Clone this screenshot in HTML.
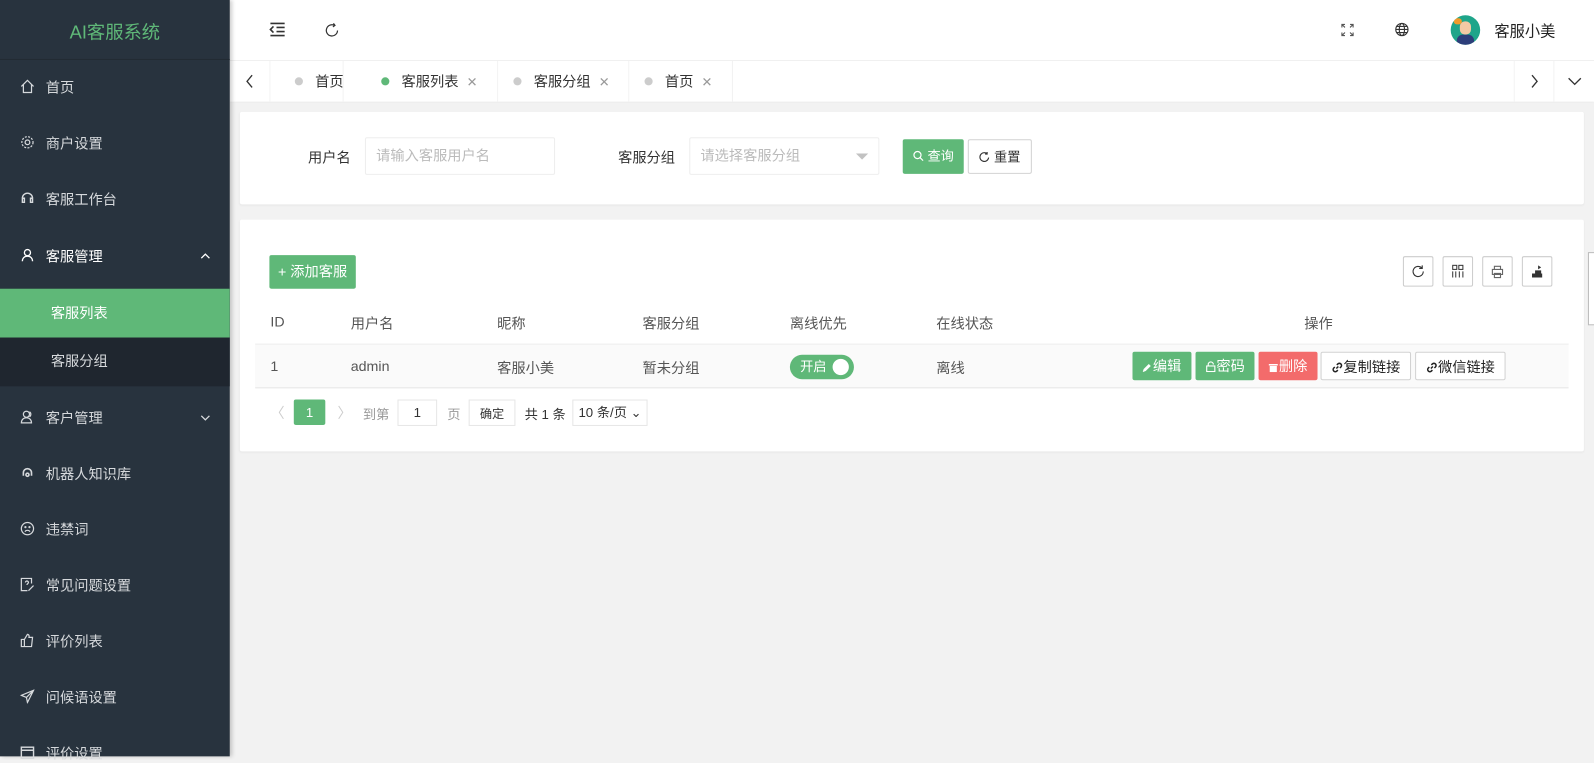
<!DOCTYPE html>
<html><head><meta charset="utf-8"><style>
*{margin:0;padding:0;box-sizing:border-box}
html,body{width:1594px;height:756px;overflow:hidden;background:#f2f2f2}
#root{position:absolute;left:0;top:0;width:1568px;height:744px;transform:scale(1.0166);transform-origin:0 0;font-family:"Liberation Sans","Noto Sans CJK SC",sans-serif;font-size:14px;color:#333}
.side{position:absolute;left:0;top:0;width:226px;height:744px;background:#28333e;box-shadow:2px 0 4px rgba(0,0,0,.2);z-index:2}
.logo{height:59px;line-height:64px;text-align:center;color:#5fb878;font-size:18px;border-bottom:1px solid #222b33}
.mi{position:absolute;left:0;width:226px;color:#d6d9dc;font-size:14px;height:20px;line-height:20px;white-space:nowrap}
.mi .ic{position:absolute;left:20px;top:2px;width:14px;height:14px}
.mi span.t{position:absolute;left:45px}
.mi .ar{position:absolute;right:18px;top:4px}
.hdr{position:absolute;left:226px;top:0;right:0;height:60px;background:#fff;border-bottom:1px solid #f0f0f0}
.tabs{position:absolute;left:226px;top:60px;right:0;height:40px;background:#fff;box-shadow:0 1px 2px rgba(0,0,0,.05)}
.tab{position:absolute;top:0;height:40px;line-height:40px;border-right:1px solid #f2f2f2;color:#333;font-size:14px;white-space:nowrap}
.dot{display:inline-block;width:8px;height:8px;border-radius:4px;background:#ccc;margin-right:12px;vertical-align:1px}
.x{color:#999;margin-left:8px;font-size:13px}
.card{position:absolute;left:236px;width:1322px;background:#fff;border-radius:2px;box-shadow:0 1px 2px rgba(0,0,0,.05)}
.inp{position:absolute;height:37px;border:1px solid #eee;border-radius:2px;color:#bbb;font-size:14px;line-height:35px;padding-left:10px;white-space:nowrap}
.btn{position:absolute;height:34px;line-height:34px;font-size:14px;text-align:center;border-radius:2px;white-space:nowrap}
.g{background:#5fb878;color:#fff}
.w{background:#fff;border:1px solid #d2d2d2;color:#333}
.th{position:absolute;top:308px;color:#555;font-size:14px;white-space:nowrap}
.td{position:absolute;top:352px;color:#555;font-size:14px;white-space:nowrap}
.sb{position:absolute;height:28px;line-height:28px;font-size:14px;top:346px;text-align:center;border-radius:2px;white-space:nowrap}
.sb svg{vertical-align:-1px;margin-right:1px}
.tool{position:absolute;top:252px;width:30px;height:30px;border:1px solid #ccc;border-radius:2px;background:#fff}
</style></head><body><div id="root">
<div class="side">
<div class="logo">AI客服系统</div>
<div class="mi" style="top:76px"><svg class="ic" viewBox="0 0 14 14" fill="none" stroke="#d6d9dc" stroke-width="1.2"><path d="M1 7L7 1l6 6M3 5v8h8V5"/></svg><span class="t">首页</span></div>
<div class="mi" style="top:131px"><svg class="ic" viewBox="0 0 14 14" fill="none" stroke="#d6d9dc" stroke-width="1.2"><circle cx="7" cy="7" r="2.3"/><circle cx="7" cy="7" r="5.5" stroke-dasharray="2 1.3"/></svg><span class="t">商户设置</span></div>
<div class="mi" style="top:186px"><svg class="ic" viewBox="0 0 14 14" fill="none" stroke="#d6d9dc" stroke-width="1.4"><path d="M2 9V7a5 5 0 0110 0v2M2 7h2v4H2zM10 7h2v4h-2z"/></svg><span class="t">客服工作台</span></div>
<div class="mi" style="top:242px;color:#fff"><svg class="ic" viewBox="0 0 14 14" fill="none" stroke="#fff" stroke-width="1.3"><circle cx="7" cy="4.5" r="3"/><path d="M2 13c0-3 2-5 5-5s5 2 5 5"/></svg><span class="t">客服管理</span><svg class="ar" width="12" height="12" viewBox="0 0 12 12" fill="none" stroke="#fff" stroke-width="1.3"><path d="M2 8l4-4 4 4"/></svg></div>
<div style="position:absolute;top:284px;left:0;width:226px;height:96px;background:#1f262f"></div>
<div style="position:absolute;top:284px;left:0;width:226px;height:48px;background:#5fb878"></div>
<div class="mi" style="top:298px;color:#fff"><span class="t" style="left:50px">客服列表</span></div>
<div class="mi" style="top:345px"><span class="t" style="left:50px">客服分组</span></div>
<div class="mi" style="top:401px"><svg class="ic" viewBox="0 0 14 14" fill="none" stroke="#d6d9dc" stroke-width="1.2"><circle cx="6" cy="4.5" r="3"/><path d="M1 13c0-3 2-5 5-5s5 2 5 5zM9 2a3 3 0 010 5"/></svg><span class="t">客户管理</span><svg class="ar" width="12" height="12" viewBox="0 0 12 12" fill="none" stroke="#d6d9dc" stroke-width="1.3"><path d="M2 4l4 4 4-4"/></svg></div>
<div class="mi" style="top:456px"><svg class="ic" viewBox="0 0 14 14" fill="none" stroke="#d6d9dc" stroke-width="1.6"><path d="M3 10V7a4 4 0 018 0v3"/><circle cx="7" cy="9" r="1.5"/></svg><span class="t">机器人知识库</span></div>
<div class="mi" style="top:511px"><svg class="ic" viewBox="0 0 14 14" fill="none" stroke="#d6d9dc" stroke-width="1.2"><circle cx="7" cy="7" r="6"/><path d="M4.5 10a3 3 0 015 0"/><circle cx="5" cy="5.5" r=".5"/><circle cx="9" cy="5.5" r=".5"/></svg><span class="t">违禁词</span></div>
<div class="mi" style="top:566px"><svg class="ic" viewBox="0 0 14 14" fill="none" stroke="#d6d9dc" stroke-width="1.2"><path d="M11 6V1H1v12h6M5 5a1.5 1.5 0 113 0c0 1-1.5 1-1.5 2.5M8 13l5-5"/></svg><span class="t">常见问题设置</span></div>
<div class="mi" style="top:621px"><svg class="ic" viewBox="0 0 14 14" fill="none" stroke="#d6d9dc" stroke-width="1.2"><path d="M1 6h3v7H1zM4 6l3-5c1 0 2 1 1.5 3H12l-1 9H4"/></svg><span class="t">评价列表</span></div>
<div class="mi" style="top:676px"><svg class="ic" viewBox="0 0 14 14" fill="none" stroke="#d6d9dc" stroke-width="1.2"><path d="M13 1L1 6l5 2 1 5zM6 8l7-7"/></svg><span class="t">问候语设置</span></div>
<div class="mi" style="top:731px"><svg class="ic" viewBox="0 0 14 14" fill="none" stroke="#d6d9dc" stroke-width="1.4"><rect x="1" y="2" width="12" height="11"/><path d="M1 5h12"/></svg><span class="t">评价设置</span></div>
</div>

<div class="hdr">
<svg style="position:absolute;left:39px;top:22px" width="16" height="14" viewBox="0 0 16 14" fill="none" stroke="#333" stroke-width="1.6"><path d="M1 1h14M7 5h8M7 9h8M1 13h14M4 4L1 7l3 3"/></svg>
<svg style="position:absolute;left:94px;top:22px" width="14" height="15" viewBox="0 0 14 15" fill="none" stroke="#333" stroke-width="1.2"><path d="M9 3A5.5 5.5 0 1012 8M8 1l1.5 2L7.5 4.5"/></svg>
<svg style="position:absolute;left:1093px;top:23px" width="13" height="13" viewBox="0 0 13 13" fill="none" stroke="#555" stroke-width="1.1"><path d="M1 4V1h3M9 1h3v3M12 9v3H9M4 12H1V9M1 1l3 3M12 1L9 4M12 12L9 9M1 12l3-3"/></svg>
<svg style="position:absolute;left:1146px;top:22px" width="14" height="14" viewBox="0 0 14 14" fill="none" stroke="#333" stroke-width="1.1"><circle cx="7" cy="7" r="6"/><ellipse cx="7" cy="7" rx="2.6" ry="6"/><path d="M1 7h12M2 4h10M2 10h10"/></svg>
<div style="position:absolute;left:1201px;top:15px;width:29px;height:29px;border-radius:50%;background:#1fa58a;overflow:hidden"><div style="position:absolute;left:9px;top:6px;width:11px;height:13px;border-radius:5px;background:#f3c9a4"></div><div style="position:absolute;left:6px;top:19px;width:17px;height:12px;border-radius:6px 6px 0 0;background:#2d3e7a"></div><div style="position:absolute;left:3px;top:3px;width:8px;height:6px;border-radius:4px;background:#f29b2a"></div></div>
<div style="position:absolute;left:1244px;top:20px;font-size:15px;color:#222;white-space:nowrap">客服小美</div>
</div>

<div class="tabs">
<div class="tab" style="left:0;width:40px;text-align:center"><svg width="10" height="14" viewBox="0 0 10 14" fill="none" stroke="#333" stroke-width="1.3" style="vertical-align:-2px"><path d="M7 1L2 7l5 6"/></svg></div>
<div class="tab" style="left:40px;width:72px;padding-left:24px"><span class="dot"></span>首页</div>
<div class="tab" style="left:112px;width:152px;padding-left:37px"><span class="dot" style="background:#5fb878"></span>客服列表<span class="x">✕</span></div>
<div class="tab" style="left:264px;width:129px;padding-left:15px"><span class="dot"></span>客服分组<span class="x">✕</span></div>
<div class="tab" style="left:393px;width:102px;padding-left:15px"><span class="dot"></span>首页<span class="x">✕</span></div>
<div class="tab" style="left:1263px;width:40px;border-left:1px solid #f2f2f2;text-align:center"><svg width="10" height="14" viewBox="0 0 10 14" fill="none" stroke="#333" stroke-width="1.3" style="vertical-align:-2px"><path d="M3 1l5 6-5 6"/></svg></div>
<div class="tab" style="left:1303px;width:40px;text-align:center;border:none"><svg width="14" height="10" viewBox="0 0 14 10" fill="none" stroke="#333" stroke-width="1.3"><path d="M1 2l6 6 6-6"/></svg></div>
</div>

<div class="card" style="top:110px;height:91px">
<div style="position:absolute;left:67px;top:35px">用户名</div>
<div class="inp" style="left:123px;top:25px;width:187px">请输入客服用户名</div>
<div style="position:absolute;left:372px;top:35px">客服分组</div>
<div class="inp" style="left:442px;top:25px;width:187px">请选择客服分组<span style="position:absolute;right:10px;top:15px;border:6px solid transparent;border-top:6px solid #c2c2c2;border-bottom:none"></span></div>
<div class="btn g" style="left:652px;top:27px;width:60px;font-size:13px"><svg width="11" height="11" viewBox="0 0 11 11" fill="none" stroke="#fff" stroke-width="1.2" style="vertical-align:-1px"><circle cx="4.5" cy="4.5" r="3.5"/><path d="M7 7l3 3"/></svg> 查询</div>
<div class="btn w" style="left:716px;top:27px;width:63px;font-size:13px"><svg width="11" height="11" viewBox="0 0 11 11" fill="none" stroke="#333" stroke-width="1.1" style="vertical-align:-1px"><path d="M9.5 6A4.3 4.3 0 118 2.2M8 .5v2H6"/></svg> 重置</div>
</div>

<div class="card" style="top:216px;height:228px"></div>
<div class="btn g" style="left:265px;top:251px;width:85px;height:33px;line-height:33px">+ 添加客服</div>
<div class="tool" style="left:1380px"><svg style="margin:7px" width="14" height="14" viewBox="0 0 14 14" fill="none" stroke="#333" stroke-width="1.1"><path d="M12 7a5 5 0 11-1.5-3.5M11 1v3H8"/></svg></div>
<div class="tool" style="left:1419px"><svg style="margin:7px" width="14" height="14" viewBox="0 0 14 14" fill="none" stroke="#333" stroke-width="1"><rect x="2" y="1" width="4" height="4"/><rect x="8" y="1" width="4" height="4"/><path d="M2 7v6M5 7v6M8.5 7v6M12 7v6"/></svg></div>
<div class="tool" style="left:1458px"><svg style="margin:7px" width="14" height="14" viewBox="0 0 14 14" fill="none" stroke="#666" stroke-width="1.1"><path d="M4 5V2h6v3M2 5h10v5H2zM4 9h6v4H4z"/></svg></div>
<div class="tool" style="left:1497px"><svg style="margin:7px" width="14" height="14" viewBox="0 0 14 14" fill="#333"><path d="M2 9h10v4H2zM5 6h6v3H5zM8 1l3 2-3 2z"/></svg></div>
<div style="position:absolute;left:1562px;top:248px;width:8px;height:72px;border:1px solid #bbb;background:#fff"></div>

<div class="th" style="left:266px">ID</div>
<div class="th" style="left:345px">用户名</div>
<div class="th" style="left:489px">昵称</div>
<div class="th" style="left:632px">客服分组</div>
<div class="th" style="left:777px">离线优先</div>
<div class="th" style="left:921px">在线状态</div>
<div class="th" style="left:1283px">操作</div>
<div style="position:absolute;left:251px;top:338px;width:1292px;height:44px;background:#fafafa;border-top:1px solid #eee;border-bottom:1px solid #e6e6e6"></div>
<div class="td" style="left:266px">1</div>
<div class="td" style="left:345px">admin</div>
<div class="td" style="left:489px">客服小美</div>
<div class="td" style="left:632px">暂未分组</div>
<div style="position:absolute;left:777px;top:349px;width:63px;height:24px;border-radius:12px;background:#5fb878;color:#fff;font-size:13px;line-height:24px;padding-left:10px;white-space:nowrap">开启<span style="position:absolute;right:5px;top:4px;width:16px;height:16px;border-radius:8px;background:#fff"></span></div>
<div class="td" style="left:921px">离线</div>
<div class="sb g" style="left:1114px;width:58px"><svg width="9" height="9" viewBox="0 0 9 9" fill="#fff"><path d="M0 9l1-3 5-5 2 2-5 5z"/></svg>编辑</div>
<div class="sb g" style="left:1176px;width:58px"><svg width="10" height="11" viewBox="0 0 10 11" fill="none" stroke="#fff" stroke-width="1.1"><rect x="1" y="5" width="8" height="5.5"/><path d="M2.5 5V3.5a2.5 2.5 0 015 0"/></svg>密码</div>
<div class="sb" style="left:1238px;width:58px;background:#f36b6b;color:#fff"><svg width="9" height="9" viewBox="0 0 9 9" fill="#fff"><path d="M0 1h9v1.5H0zM1 3h7v6H1z"/></svg>删除</div>
<div class="sb w" style="left:1299px;width:89px;color:#222"><svg width="11" height="11" viewBox="0 0 11 11" fill="none" stroke="#222" stroke-width="1.5"><path d="M4.5 6.5l2-2M5 3l1-1a2 2 0 013 3L8 6M6 8L5 9a2 2 0 01-3-3l1-1"/></svg>复制链接</div>
<div class="sb w" style="left:1392px;width:89px;color:#222"><svg width="11" height="11" viewBox="0 0 11 11" fill="none" stroke="#222" stroke-width="1.5"><path d="M4.5 6.5l2-2M5 3l1-1a2 2 0 013 3L8 6M6 8L5 9a2 2 0 01-3-3l1-1"/></svg>微信链接</div>

<div style="position:absolute;left:266px;top:396px;color:#ccc">〈</div>
<div style="position:absolute;left:289px;top:393px;width:31px;height:25px;background:#5fb878;color:#fff;text-align:center;line-height:25px;border-radius:2px;font-size:13px">1</div>
<div style="position:absolute;left:332px;top:396px;color:#ccc">〉</div>
<div style="position:absolute;left:357px;top:397px;color:#999;font-size:13px">到第</div>
<div style="position:absolute;left:391px;top:393px;width:39px;height:26px;border:1px solid #e6e6e6;text-align:center;line-height:24px;font-size:13px">1</div>
<div style="position:absolute;left:440px;top:397px;color:#999;font-size:13px">页</div>
<div style="position:absolute;left:461px;top:393px;width:46px;height:26px;border:1px solid #e6e6e6;text-align:center;line-height:26px;font-size:12px">确定</div>
<div style="position:absolute;left:516px;top:397px;font-size:13px;white-space:nowrap">共 1 条</div>
<div style="position:absolute;left:563px;top:393px;width:74px;height:26px;border:1px solid #e6e6e6;line-height:24px;padding-left:5px;font-size:13px;white-space:nowrap">10 条/页 ⌄</div>
</div></body></html>
